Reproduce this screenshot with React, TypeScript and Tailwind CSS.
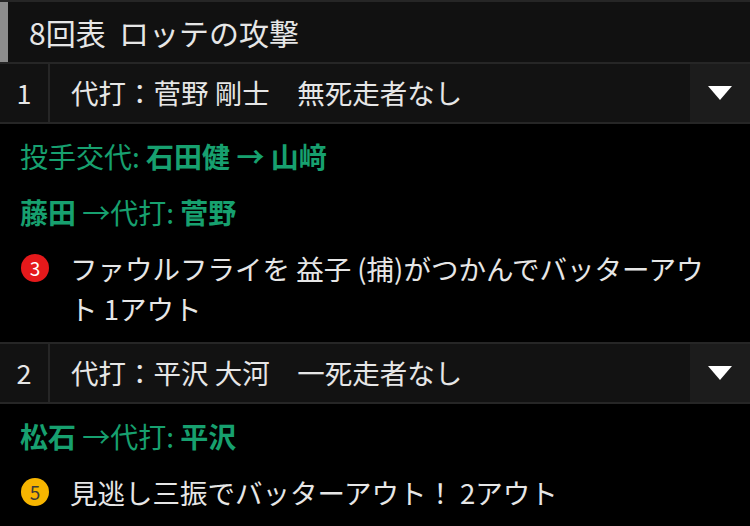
import React from 'react';

const font = { fontFamily: '"Noto Sans CJK JP", "Noto Sans", sans-serif' };

function BatterRow({ no, text }: { no: number; text: string }) {
  return (
    <div className="flex h-[62px] bg-[#121212] border-y-2 border-[#262626]">
      <div className="w-[50px] flex items-center justify-center border-r-2 border-[#262626] text-[27px] text-[#e6e6e6]">
        {no}
      </div>
      <div className="flex-1 flex items-center pl-[21px] text-[27.5px] text-[#e6e6e6] whitespace-pre">
        {text}
      </div>
      <div className="w-[60px] flex items-center justify-center bg-[#1c1c1c]">
        <svg width="24" height="14" viewBox="0 0 24 14">
          <path d="M0 0 H24 L12 14 Z" fill="#fff" />
        </svg>
      </div>
    </div>
  );
}

function Sub({ children }: { children: React.ReactNode }) {
  return <div className="py-2 leading-[40px] text-[28px] text-[#17a06f]">{children}</div>;
}

function Play({ n, yellow, text }: { n: number; yellow?: boolean; text: string }) {
  return (
    <div className="flex items-start py-2 leading-[40px] text-[27.5px] text-[#e6e6e6]">
      {yellow ? (
        <div className="mt-1.5 ml-px mr-[21px] size-7 shrink-0 rounded-full bg-[#f7b500] text-center text-[19px] leading-7 text-[#3a3a3a]">
          {n}
        </div>
      ) : (
        <div className="mt-1.5 ml-px mr-[21px] size-7 shrink-0 rounded-full bg-[#e5191b] text-center text-[19px] leading-7 text-white">
          {n}
        </div>
      )}
      <div className="flex-1 pr-8">{text}</div>
    </div>
  );
}

export default function App() {
  return (
    <div style={font} className="w-[750px] h-[526px] bg-black overflow-hidden">
      <div className="flex h-[62px] bg-[#111] border-t-2 border-[#262626]">
        <div className="w-2 bg-[#8c8c8c]" />
        <div className="flex items-center pl-[21px] text-[30px] text-[#e6e6e6] whitespace-pre">8回表  ロッテの攻撃</div>
      </div>

      <BatterRow no={1} text={'代打：菅野 剛士　無死走者なし'} />
      <div className="pl-5 pt-1 pb-[6px]">
        <Sub>
          投手交代: <b>石田健 → 山﨑</b>
        </Sub>
        <Sub>
          <b>藤田</b> →代打: <b>菅野</b>
        </Sub>
        <Play n={3} text="ファウルフライを 益子 (捕)がつかんでバッターアウト 1アウト" />
      </div>

      <BatterRow no={2} text={'代打：平沢 大河　一死走者なし'} />
      <div className="pl-5 pt-1 pb-[6px] border-b-2 border-[#262626]">
        <Sub>
          <b>松石</b> →代打: <b>平沢</b>
        </Sub>
        <Play n={5} yellow text="見逃し三振でバッターアウト！ 2アウト" />
      </div>
    </div>
  );
}
